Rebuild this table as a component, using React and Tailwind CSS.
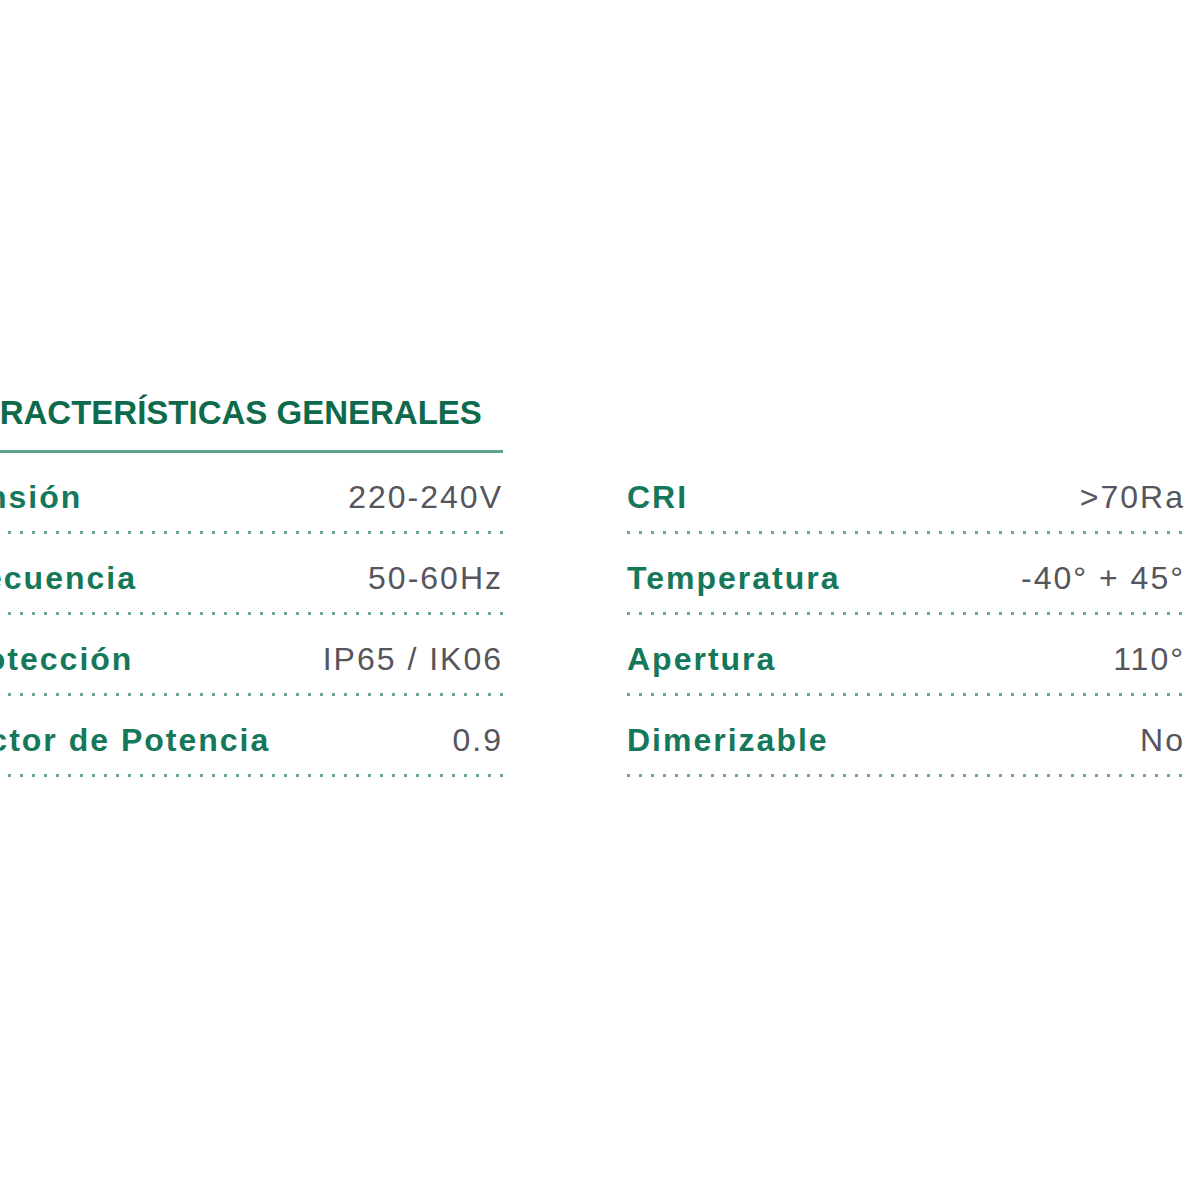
import React from "react";

const leftSpecs = [
  { label: "Tensión", value: "220-240V" },
  { label: "Frecuencia", value: "50-60Hz" },
  { label: "Protección", value: "IP65 / IK06" },
  { label: "Factor de Potencia", value: "0.9" },
];

const rightSpecs = [
  { label: "CRI", value: ">70Ra" },
  { label: "Temperatura", value: "-40° + 45°" },
  { label: "Apertura", value: "110°" },
  { label: "Dimerizable", value: "No" },
];

const SpecRow = ({ label, value }) => (
  <div className="flex flex-col">
    <div className="flex items-end justify-between pt-[26px] pb-[16px]">
      <span className="text-[32px] leading-[36px] font-bold tracking-[2px] text-[#16785a]">
        {label}
      </span>
      <span className="text-[32px] leading-[36px] tracking-[2px] text-[#55555d]">
        {value}
      </span>
    </div>
    {/* dotted separator */}
    <div className="h-[3px] w-full bg-[linear-gradient(to_right,#6aa98f_3px,transparent_3px)] bg-[length:12px_3px] bg-repeat-x" />
  </div>
);

const App = () => {
  return (
    <div
      className="w-[1200px] h-[1200px] overflow-hidden bg-white pt-[393px]"
      style={{ fontFamily: '"Liberation Sans", Arial, sans-serif' }}
    >
      <div className="flex gap-[124px] -ml-[52px]">
        {/* Left column */}
        <div className="w-[555px] flex flex-col">
          <div className="flex flex-col">
            <h2 className="text-[33px] leading-[40px] font-bold text-[#0e6a4c] ml-[4px] whitespace-nowrap">
              CARACTERÍSTICAS GENERALES
            </h2>
            <div className="mt-[17px] h-[3px] bg-[#5ea488]" />
          </div>
          {leftSpecs.map((s) => (
            <SpecRow key={s.label} label={s.label} value={s.value} />
          ))}
        </div>

        {/* Right column */}
        <div className="w-[558px] flex flex-col pt-[60px]">
          {rightSpecs.map((s) => (
            <SpecRow key={s.label} label={s.label} value={s.value} />
          ))}
        </div>
      </div>
    </div>
  );
};

export default App;
